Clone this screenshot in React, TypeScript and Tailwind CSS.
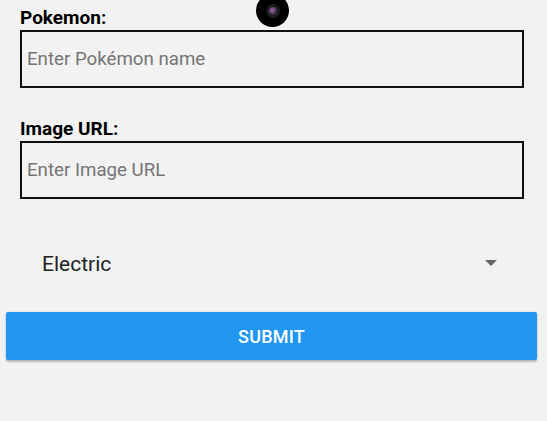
import React from "react";

function Camera() {
  return (
    <div className="absolute left-[256px] top-[-6px] w-[33px] h-[33px] rounded-full bg-black flex items-center justify-center">
      <div className="w-[14px] h-[14px] rounded-full bg-[#1c1c1c] flex items-center justify-center">
        <div className="w-[8px] h-[8px] rounded-full bg-[radial-gradient(circle_at_40%_40%,#9a6fa3,#3a2340_70%)]" />
      </div>
    </div>
  );
}

function Field({ label, placeholder }: { label: string; placeholder: string }) {
  return (
    <div className="flex flex-col pl-[20px] pr-[23px]">
      <label className="text-[19px] leading-[22px] font-bold text-black mb-[1px]">
        {label}
      </label>
      <input
        placeholder={placeholder}
        className="h-[58px] border-2 border-[#111] bg-transparent pl-[5px] text-[18.7px] text-[#222] placeholder:text-[#757575] outline-none"
      />
    </div>
  );
}

export default function App() {
  return (
    <div className="relative w-[547px] h-[421px] overflow-hidden bg-[#f2f2f2] font-['Roboto',sans-serif]">
      <Camera />
      <div className="flex flex-col pt-[7px]">
        <Field label="Pokemon:" placeholder="Enter Pokémon name" />
        <div className="h-[30px]" />
        <Field label="Image URL:" placeholder="Enter Image URL" />

        <div className="mt-[53px] pl-[20px] pr-[23px]">
          <div className="flex items-center justify-between pl-[22px] pr-[27px] h-[24px]">
            <span className="text-[21px] leading-[24px] text-[#212121]">Electric</span>
            <svg width="12" height="6" viewBox="0 0 12 6" className="mt-[-2px]">
              <path d="M0 0 L12 0 L6 6 Z" fill="#666" />
            </svg>
          </div>
        </div>

        <button className="mt-[36px] ml-[6px] w-[531px] h-[48px] rounded-[2px] bg-[#2196f3] text-white text-[18px] font-medium tracking-[0.2px] shadow-[0_2px_2px_rgba(0,0,0,0.24),0_0_2px_rgba(0,0,0,0.12)]">
          SUBMIT
        </button>
      </div>
    </div>
  );
}
